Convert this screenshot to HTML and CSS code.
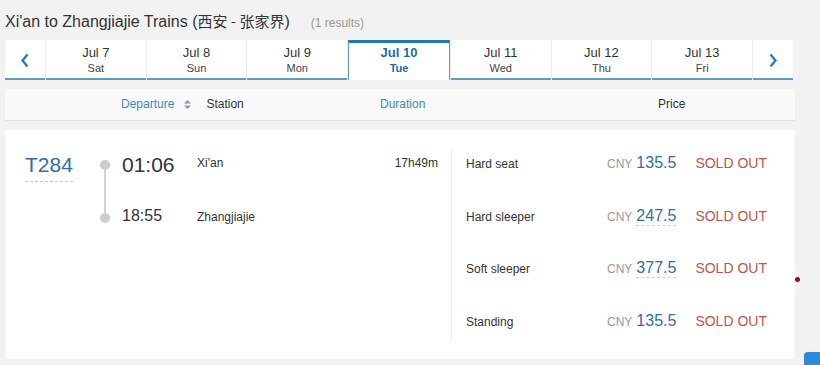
FILE: index.html
```html
<!DOCTYPE html>
<html lang="en">
<head>
    <meta charset="UTF-8">
    <meta name="viewport" content="width=device-width, initial-scale=1.0">
    <title>Xi'an to Zhangjiajie Trains</title>
    <link rel="stylesheet" href="styles.css">
</head>
<body>
    <div class="page">
        <h1 class="title">Xi'an to Zhangjiajie Trains (<span class="cjk">西安 - 张家界</span>)<span class="count">(1 results)</span></h1>

        <!-- date strip -->
        <div class="dates">
            <div class="date-arrow">
                <svg width="8" height="15" viewBox="0 0 8 15"><polyline points="6.5,1.5 1.5,7.5 6.5,13.5" fill="none" stroke="#1e7bc0" stroke-width="2.2"/></svg>
            </div>
            <div class="date-tab"><div class="date-day">Jul 7</div><div class="date-week">Sat</div></div>
            <div class="date-tab"><div class="date-day">Jul 8</div><div class="date-week">Sun</div></div>
            <div class="date-tab"><div class="date-day">Jul 9</div><div class="date-week">Mon</div></div>
            <div class="date-tab active"><div class="date-day">Jul 10</div><div class="date-week">Tue</div></div>
            <div class="date-tab"><div class="date-day">Jul 11</div><div class="date-week">Wed</div></div>
            <div class="date-tab"><div class="date-day">Jul 12</div><div class="date-week">Thu</div></div>
            <div class="date-tab"><div class="date-day">Jul 13</div><div class="date-week">Fri</div></div>
            <div class="date-arrow">
                <svg width="8" height="15" viewBox="0 0 8 15"><polyline points="1.5,1.5 6.5,7.5 1.5,13.5" fill="none" stroke="#1e7bc0" stroke-width="2.2"/></svg>
            </div>
        </div>

        <!-- column headers -->
        <div class="list-head">
            <div class="head-dep">
                <span class="link">Departure</span>
                <svg class="sort" width="7" height="9" viewBox="0 0 7 9"><polygon points="3.5,0 7,3.5 0,3.5" fill="#7f9cb0"/><polygon points="0,5.5 7,5.5 3.5,9" fill="#7f9cb0"/></svg>
                <span class="head-station">Station</span>
            </div>
            <div class="head-dur"><span class="link">Duration</span></div>
            <div class="head-price">Price</div>
        </div>

        <!-- train card -->
        <div class="train">
            <div class="train-left">
                <div class="train-no"><span>T284</span></div>
                <div class="timeline">
                    <div class="dot"></div>
                    <div class="line"></div>
                    <div class="dot"></div>
                </div>
                <div class="stops">
                    <div class="stop first">
                        <span class="time big">01:06</span>
                        <span class="station">Xi'an</span>
                    </div>
                    <div class="stop">
                        <span class="time">18:55</span>
                        <span class="station">Zhangjiajie</span>
                    </div>
                </div>
                <div class="duration">17h49m</div>
            </div>
            <div class="seats">
                <div class="seat">
                    <span class="seat-name">Hard seat</span>
                    <span class="cny">CNY</span>
                    <span class="price">135.5</span>
                    <span class="sold">SOLD OUT</span>
                </div>
                <div class="seat">
                    <span class="seat-name">Hard sleeper</span>
                    <span class="cny">CNY</span>
                    <span class="price dashed">247.5</span>
                    <span class="sold">SOLD OUT</span>
                </div>
                <div class="seat">
                    <span class="seat-name">Soft sleeper</span>
                    <span class="cny">CNY</span>
                    <span class="price dashed">377.5</span>
                    <span class="sold">SOLD OUT</span>
                </div>
                <div class="seat">
                    <span class="seat-name">Standing</span>
                    <span class="cny">CNY</span>
                    <span class="price">135.5</span>
                    <span class="sold">SOLD OUT</span>
                </div>
            </div>
        </div>
    </div>

    <div class="red-dot"></div>
    <div class="float-btn"></div>
</body>
</html>
```

FILE: styles.css
```css
body {
    margin: 0;
    background: #f2f2f2;
    font-family: "Liberation Sans", Arial, sans-serif;
    color: #333;
    overflow: hidden;
}
.page {
    padding: 0 25px 0 5px;
}
.title {
    margin: 0;
    padding-top: 11px;
    height: 29px;
    line-height: 20px;
    font-size: 16px;
    font-weight: normal;
    color: #333;
}
.cjk {
    font-family: "Noto Sans CJK SC", sans-serif;
    font-size: 15px;
}
.count {
    margin-left: 21px;
    font-size: 12px;
    color: #999;
}

/* date strip */
.dates {
    display: flex;
    gap: 1px;
    height: 40px;
    margin-right: 2px;
    background: #ececec;
}
.date-arrow,
.date-tab {
    box-sizing: border-box;
    background: #fff;
    border-bottom: 2px solid #5f9dbf;
}
.date-arrow {
    width: 40px;
    display: flex;
    align-items: center;
    justify-content: center;
    padding-top: 2px;
}
.date-tab {
    flex: 1;
    text-align: center;
    padding-top: 5px;
}
.date-day {
    font-size: 13px;
    line-height: 16px;
}
.date-week {
    font-size: 11px;
    line-height: 14px;
    color: #444;
}
.date-tab.active {
    border-top: 3px solid #1f78b4;
    border-left: 1px solid #5f9dbf;
    border-right: 1px solid #5f9dbf;
    border-bottom: none;
    padding-top: 2px;
    color: #1f6aa8;
    font-weight: bold;
}
.date-tab.active .date-week {
    color: #1f6aa8;
}

/* headers */
.list-head {
    display: flex;
    margin-top: 9px;
    height: 31px;
    line-height: 31px;
    padding-left: 116px;
    background: #fafafa;
    box-shadow: 0 1px 1px rgba(0, 0, 0, 0.06);
    font-size: 12px;
}
.head-dep {
    width: 259px;
    display: flex;
    align-items: center;
}
.link {
    color: #3a8abb;
}
.sort {
    margin-left: 10px;
}
.head-station {
    margin-left: 15px;
}
.head-dur {
    width: 278px;
}

/* card */
.train {
    display: flex;
    margin-top: 10px;
    height: 229px;
    background: #fff;
}
.train-left {
    display: flex;
    width: 446px;
    box-sizing: border-box;
    padding-right: 13px;
}
.train-no {
    width: 95px;
    box-sizing: border-box;
    padding: 23px 0 0 20px;
}
.train-no span {
    display: inline-block;
    font-size: 21px;
    line-height: 24px;
    padding-bottom: 4px;
    color: #2c6ea5;
    border-bottom: 1px dashed #c8c8c8;
}
.timeline {
    width: 10px;
    padding-top: 30px;
    display: flex;
    flex-direction: column;
    align-items: center;
}
.dot {
    width: 10px;
    height: 10px;
    border-radius: 50%;
    background: #cdcdcd;
}
.line {
    width: 2px;
    height: 43px;
    background: #d2d2d2;
}
.stops {
    flex: 1;
    padding: 23px 0 0 12px;
}
.stop {
    display: flex;
    align-items: baseline;
}
.stop.first {
    align-items: flex-start;
    margin-bottom: 29px;
}
.time {
    width: 75px;
    font-size: 16px;
    line-height: 20px;
}
.time.big {
    font-size: 21px;
    line-height: 24px;
}
.station {
    font-size: 12px;
    line-height: 16px;
}
.stop.first .station {
    padding-top: 2px;
}
.duration {
    padding-top: 25px;
    font-size: 12px;
    line-height: 16px;
}

/* seats */
.seats {
    flex: 1;
    margin: 17.7px 0 17px;
    padding: 5.5px 0 0 14px;
    border-left: 1px solid #eee;
    display: flex;
    flex-direction: column;
    gap: 32.5px;
}
.seat {
    display: flex;
    align-items: baseline;
    height: 20px;
    line-height: 20px;
}
.seat-name {
    width: 141px;
    font-size: 12px;
}
.cny {
    font-size: 12px;
    color: #999;
    margin-right: 4px;
}
.price {
    font-size: 16px;
    line-height: 18px;
    color: #336e9e;
}
.price.dashed {
    border-bottom: 1px dashed #cfcfcf;
}
.sold {
    margin-left: 19px;
    font-size: 14px;
    color: #c4524d;
}

/* overlays */
.red-dot {
    position: absolute;
    left: 795px;
    top: 277px;
    width: 5px;
    height: 5px;
    border-radius: 50%;
    background: #b3000e;
}
.float-btn {
    position: absolute;
    left: 804px;
    top: 352px;
    width: 16px;
    height: 13px;
    border-radius: 4px 0 0 0;
    background: #2d8ad9;
}
```
